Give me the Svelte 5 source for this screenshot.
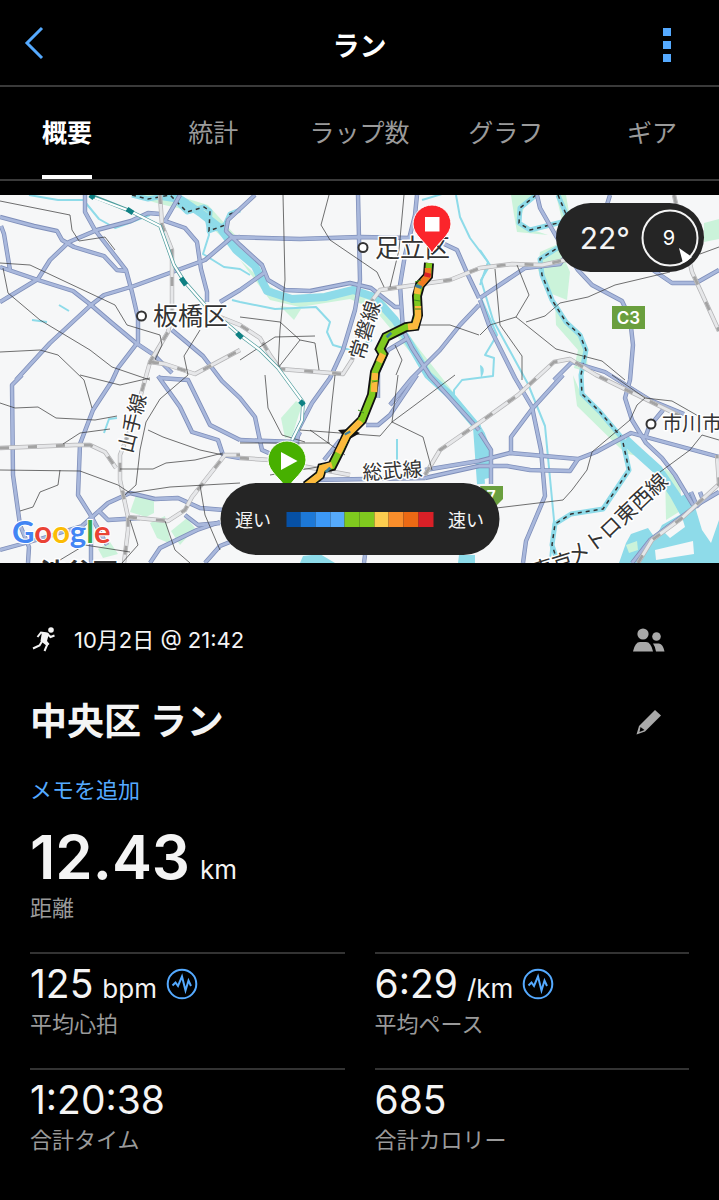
<script>
	const tabs = ["概要", "統計", "ラップ数", "グラフ", "ギア"];
	let active = 0;

	const stats = [
		{ value: "125", unit: "bpm", label: "平均心拍", chart: true },
		{ value: "6:29", unit: "/km", label: "平均ペース", chart: true },
		{ value: "1:20:38", label: "合計タイム" },
		{ value: "685", label: "合計カロリー" },
	];

	const paceColors = [
		"#0650a5", "#1d78d6", "#3c98f6", "#56aafb", "#7fc91f",
		"#7fc91f", "#fccd4f", "#f98e2b", "#eb6914", "#d92027",
	];

	const parks = [
		"M130,195 L175,195 208,205 235,235 240,250 225,240 195,212 160,204Z",
		"M240,260 L270,300 300,307 350,299 375,310 400,340 450,400 479,436 479,425 420,350 380,295 350,288 290,300 265,283Z",
		"M280,306 L301,309 294,320Z",
		"M130,512 L136,495 154,500 154,513 146,517Z",
		"M150,523 L165,516 171,544 157,538Z",
		"M171,531 L187,518 195,528 180,545Z",
		"M98,549 L110,542 118,554 103,558Z",
		"M281,418 L296,401 302,405 292,436 285,438Z",
		"M511,195 L536,195 525,205 519,222 530,229 548,235 517,232 514,215Z",
		"M556,195 L566,195 570,218 562,220Z",
		"M540,252 L558,244 570,272 567,300 547,292 538,270Z",
		"M555,303 L571,328 586,345 588,372 574,368 578,350 556,325Z",
		"M573,375 L581,394 604,420 640,457 625,453 577,406Z",
		"M665,468 L680,482 682,510 666,520Z",
		"M704,223 L719,219 719,239 704,242Z",
	];

	const water = [
		"M155,195 L180,199 202,214 220,228 236,250 255,266 267,291 292,299 325,297 353,290 374,297 395,320 410,344 428,375 450,395 477,427 481,484",
	];

	const streams = [
		"M29,195 L58,200 84,200",
		"M85,202 L99,219 115,228 129,223 150,215",
		"M205,215 L209,235 203,254 224,267 240,269 250,275",
		"M232,300 L240,302 275,309 316,307 330,322 327,332 333,345 350,350 372,340",
		"M456,195 L460,217 470,238 488,262 480,285",
		"M422,200 L442,194",
		"M480,250 L490,265 481,280 493,320 528,384 545,426 554,520 550,560",
		"M480,296 L497,335 485,355 494,358 493,376 462,380 454,390 454,401",
		"M59,305 L69,311",
		"M32,320 L47,322",
		"M104,433 L109,419 117,418",
		"M397,439 L397,460",
	];

	const levees = [
		"M132,195 L148,199 170,195 187,212 204,207 210,211 209,231 225,225 230,214 240,210",
		"M536,195 L520,208 519,223 530,230 558,223 580,217",
		"M558,195 L566,214 570,240 540,259 542,275 552,300 566,322 580,335 586,350 581,375 582,394 600,412 622,438 629,470 603,509 571,514 555,524 552,545 556,557",
	];

	const roads = [
		"M0,217 L34,226 57,231 62,240 74,247 104,256 117,270 127,271",
		"M85,195 L85,212 95,230 126,270 132,292 138,318 138,342 118,368 112,381 93,410 80,444 78,495 90,514 107,545",
		"M0,302 L38,279 50,260 69,242 97,230 131,221 148,213 160,214",
		"M0,267 L38,280 73,291 91,305 112,323 136,343 154,355 172,373",
		"M16,380 L50,343 91,305 104,295 134,286 205,260 231,238 240,237",
		"M1,226 L4,234 10,270",
		"M180,195 L165,221 185,228 197,242 201,269 207,292 207,302",
		"M255,195 L228,220 226,231 240,245 262,265 268,280 285,290 310,291 350,283 371,288 395,307 402,307",
		"M220,302 L240,290 264,273",
		"M230,237 L300,239 360,237 410,238",
		"M358,195 L360,280 355,310 343,350 330,378 312,403 298,430 297,445",
		"M417,195 L415,215 405,255 400,285 403,330 412,348 430,376 479,430",
		"M440,242 L457,250 468,275 479,298",
		"M479,305 L460,325 440,350 412,378 390,405",
		"M408,338 L388,350 378,372 378,398",
		"M417,375 L390,415 378,425 366,425",
		"M480,298 L525,268 560,264 570,250",
		"M537,195 L540,208 556,236 578,270 592,285 622,301 630,318 633,345 630,380 625,398 632,420 646,443 662,458 675,475 693,505",
		"M610,195 L606,208",
		"M650,268 L672,283 696,283 719,270",
		"M480,300 L490,328 515,378 532,407 541,450 545,496 526,541 523,563",
		"M554,380 L572,362 605,372 650,400 684,414",
		"M563,375 L532,409 511,437 511,454",
		"M425,470 L479,461 510,453 578,459 596,452 631,433 719,457",
		"M425,478 L479,466 507,466 530,470 570,471 578,459",
		"M480,433 L491,450 491,484",
		"M645,438 L649,427 663,410",
		"M632,563 L650,540 680,518 700,503 719,492",
		"M22,375 L12,385 13,475 20,525 29,547 28,563",
		"M0,550 L40,539 82,526 108,503 130,493 155,499 178,498 200,508 224,510",
		"M158,376 L180,407 192,432 218,440 223,455 240,458",
		"M160,378 L188,380 210,425 240,440",
		"M91,515 L91,563",
		"M98,510 L108,520 140,518",
		"M150,563 L160,548 197,530 220,522",
		"M185,515 L198,525 220,523",
		"M172,330 L203,356 222,381 240,398 255,417 262,450 280,458",
		"M205,563 L220,546 235,540",
		"M240,440 L295,442 300,432",
		"M310,480 L425,478",
		"M324,460 L340,440",
		"M365,555 L364,563",
		"M691,492 L697,506 703,500 700,492",
	];

	const rails = [
		"M160,195 L162,225 172,250 172,315 168,332 150,362 143,387 134,420 120,455 120,480 128,517 128,530 124,563",
		"M0,448 L75,445 90,445 105,452 116,468",
		"M150,362 L165,364 195,374 225,358 240,350",
		"M128,517 L168,521 185,510 192,497 225,455 240,455",
		"M215,315 L240,325 260,338 270,355 280,369 343,374 352,360 365,310 380,290 450,280 480,268 512,264 542,265 570,259",
		"M240,458 L270,460 350,475",
		"M425,475 L440,450 479,423 518,395 554,362 570,359 596,375 680,416",
		"M674,195 L692,272 719,331",
		"M638,563 L652,540 682,518 719,484 717,455",
	];

	const lines = [
		"M0,201 L70,215 72,230 79,241 105,237 115,250",
		"M0,263 L30,265 115,305 127,325 160,335 162,345 155,360",
		"M3,268 L8,293 40,320 90,350 112,367 150,380",
		"M0,352 L40,350 58,355 84,380 92,408",
		"M0,403 L15,408 38,407 56,418 95,420 117,416",
		"M63,444 L80,433 110,429",
		"M0,470 L80,471 118,485 130,493 170,487 240,483",
		"M60,470 L58,485 40,492 33,507 20,511",
		"M80,375 L120,385 150,378",
		"M146,422 L140,450 136,485 125,495",
		"M120,469 L153,469 166,463 195,460 223,453",
		"M148,430 L163,437 200,450 223,455",
		"M200,330 L184,356 188,375 160,399 146,422",
		"M283,195 L285,280 280,330 278,368",
		"M329,195 L321,225 330,240 377,272 384,287",
		"M404,195 L399,250 390,287",
		"M240,317 L280,322 300,340 315,343 319,370",
		"M405,325 L450,325 479,335",
		"M480,335 L490,325 516,317 556,349 602,361 625,380",
		"M526,322 L545,316 560,303 588,297 615,285 670,272",
		"M700,254 L719,247",
		"M495,269 L500,325 522,356 522,380",
		"M517,265 L529,295 516,317",
		"M265,375 L268,408 282,435 305,442",
		"M335,375 L332,402 328,443",
		"M398,375 L392,422 423,437 432,470",
		"M392,422 L380,436 300,430",
		"M455,375 L415,405 392,422",
		"M395,345 L402,360 396,375",
		"M480,510 L563,500 572,490 587,470 592,452 630,420 637,405 645,398 672,401 700,417",
		"M612,375 L645,398",
		"M660,472 L690,450 702,435 719,440",
		"M240,443 L330,443 M310,430 L345,455 M270,475 L330,465",
		"M60,560 L85,545 130,552 M130,520 L138,545 122,563 M200,485 L205,515 220,550 M165,521 L175,550 190,563",
		"M240,360 L275,337 315,336 M278,368 L300,340",
	];

	const route =
		"M429,263 L428,276 420,285 417,296 418,315 415,326 406,327 386,337 380,349 383,354 375,372 372,395 362,420 347,435 340,450 332,466 322,468 320,475 306,486";

	const pace = [
		["#f07a20", "M428,268 L428,276 420,285"],
		["#d92027", "M428,273 L427,277"],
		["#fcb93d", "M418,287 L417,294"],
		["#fcb93d", "M418,306 L418,317 415,326 408,327"],
		["#fcb93d", "M383,354 L379,362"],
		["#fcb93d", "M375,373 L374,392"],
		["#fcb93d", "M361,421 L347,435 338,453"],
		["#fcb93d", "M332,465 L322,468 320,475 306,486"],
		["#3d7f9c", "M419,285 L418,288 M388,334 L390,336 M347,432 L348,434 M327,469 L329,471"],
		["#7fc91f", "M362,418 L361,421 M375,380 L375,381"],
	];
</script>

<main>
	<header>
		<button class="back" aria-label="戻る">
			<svg width="20" height="34" viewBox="0 0 20 34">
				<path d="M18 2L3 17L18 32" fill="none" stroke="currentColor" stroke-width="3" />
			</svg>
		</button>
		<h1>ラン</h1>
		<button class="more" aria-label="メニュー">
			<svg width="8" height="34" viewBox="0 0 8 34">
				<path d="M0 0H8V8H0zM0 13H8V21H0zM0 26H8V34H0z" fill="currentColor" />
			</svg>
		</button>
	</header>

	<nav>
		<div class="tabs">
			{#each tabs as tab, i}
				<button class="tab" class:active={active === i} on:click={() => (active = i)}>
					{tab}
				</button>
			{/each}
		</div>
	</nav>

	<section class="map">
		<svg class="canvas" viewBox="0 195 719 368">
			<rect y="195" width="719" height="368" fill="#f6f7f8" />
			<g fill="#cbf3da">
				{#each parks as d}<path {d} />{/each}
			</g>
			<g fill="none" stroke="#8edbe9" stroke-linejoin="round">
				{#each water as d}<path {d} stroke-width="8" />{/each}
				{#each streams as d}<path {d} stroke-width="2" />{/each}
				{#each levees as d}<path {d} stroke-width="5" />{/each}
				<path d="M625,440 L638,452 658,470 675,495 686,515" stroke-width="10" />
			</g>
			<g fill="#8edbe9">
				<path d="M480,425 Q491,440 490,462 L489,478 480,480Z" />
				<path d="M480,365 Q487,368 481,378Z" />
				<path d="M676,498 L696,490 719,500 719,563 619,563 626,543 631,534 648,528 655,538 662,525 685,512Z" />
				<path d="M458,563 L459,555 475,555 475,563Z M300,563 L303,556 320,554 335,563Z" />
			</g>
			<path
				d="M690,490 L719,482 719,520 711,543 702,530Z M655,550 L693,541 694,554 656,560Z M662,530 L682,517 685,527 670,538Z"
				fill="#f6f7f8"
			/>
			<path d="M626,545 L637,541 638,550 629,553Z" fill="#cbf3da" />
			<g fill="none" stroke="#333" stroke-width="1.5" stroke-dasharray="4 4">
				{#each levees as d}<path {d} />{/each}
			</g>
			<g fill="none" stroke-linejoin="round">
				{#each roads as d}<path {d} stroke="#7f8fba" stroke-width="4.4" />{/each}
				{#each roads as d}<path {d} stroke="#a9b8dc" stroke-width="2.8" />{/each}
				{#each rails as d}<path {d} stroke="#b4b4b6" stroke-width="4.4" />{/each}
				{#each rails as d}<path {d} stroke="#e6e7e9" stroke-width="3" />{/each}
				{#each rails as d}
					<path {d} stroke="#a3a3a3" stroke-width="2.8" stroke-dasharray="9 19" />
				{/each}
				{#each lines as d}<path {d} stroke="#333" stroke-width="0.7" />{/each}
				<path
					d="M90,195 L105,201 130,211 160,226 165,240 174,265 184,281 205,305 240,335 260,350 278,368 303,402 302,420 292,440"
					stroke="#4c9c9c"
					stroke-width="3.6"
				/>
				<path
					d="M95,198 L130,211 160,226 165,240 174,265 184,281 205,305 240,335 260,350 278,368 303,402 302,420 292,440"
					stroke="#fff"
					stroke-width="2.2"
				/>
				<path
					d="M90,195 L94,198 M127,209 L133,213 M181,278 L186,285 M237,333 L242,338 M300,401 L304,405"
					stroke="#0e8083"
					stroke-width="5"
				/>
			</g>

			<g class="place">
				<text x="153" y="325" font-size="25">板橋区</text>
				<text x="375" y="257" font-size="25">足立区</text>
				<text x="662" y="431" font-size="20">市川市</text>
				<text x="40" y="582" font-size="26" font-weight="700">渋谷区</text>
				<text x="363" y="480" font-size="20" transform="rotate(-4 363 480)">総武線</text>
				<text x="363" y="361" font-size="20" transform="rotate(-73 363 361)">常磐線</text>
				<text x="132" y="454" font-size="20" transform="rotate(-76 132 454)">山手線</text>
				<path id="metro" d="M535,579 L570,568 605,543 690,463" fill="none" />
				<text font-size="21"><textPath href="#metro">東京メトロ東西線</textPath></text>
			</g>
			<g fill="#fff" stroke="#333" stroke-width="2">
				<circle cx="141.500" cy="316" r="4.500" />
				<circle cx="363" cy="247.500" r="4.500" />
				<circle cx="651" cy="424" r="4.500" />
			</g>

			<g class="shield">
				<path d="M612 306H645V329H612z" />
				<text x="628.500" y="324" font-size="17">C3</text>
				<path d="M480 486H503V499L490 512z" />
				<text x="491" y="502" font-size="16">7</text>
			</g>

			<g fill="none" stroke-linejoin="miter">
				<path d={route} stroke="#111" stroke-width="10" />
				<path d="M338,430 L350,429 360,433 348,440Z" fill="#111" />
				<path d={route} stroke="#7fc91f" stroke-width="6.4" />
				{#each pace as [color, d]}
					<path {d} stroke={color} stroke-width="6.4" />
				{/each}
				<path
					d="M421,280 L415,282 M420,301 L414,300 M421,309 L415,309 M378,381 L372,382 M364,413 L358,410"
					stroke="#39901a"
				/>
			</g>

			<path
				class="pin"
				fill="#fb252b"
				d="M432,253 C426,242 413,235 413,224 A18.500,18.500 0 0 1 451,224 C451,235 438,242 432,253Z"
			/>
			<path d="M425 217H439.500V231.500H425z" fill="#fff" />
			<path
				class="pin"
				fill="#47b000"
				d="M287,490 C282,479 268,472 268,460 A18.500,18.500 0 0 1 306,460 C306,472 292,479 287,490Z"
			/>
			<path d="M281 452L297.500 461L281 470z" fill="#fff" />

			<text class="logo" x="12" y="543">
				<tspan fill="#4285f4">G</tspan><tspan fill="#ea4335">o</tspan><tspan fill="#fbbc05">o</tspan><tspan fill="#4285f4">g</tspan><tspan fill="#34a853">l</tspan><tspan fill="#ea4335">e</tspan>
			</text>
		</svg>

		<div class="weather">
			<span>22°</span>
			<svg width="58" height="58" viewBox="0 0 58 58">
				<circle cx="29" cy="29" r="27.500" fill="none" stroke="#f4f4f4" stroke-width="2" />
				<path d="M38 39L51 48Q47 52 42 54z" fill="#fff" />
				<text x="28" y="36" font-size="20" text-anchor="middle" fill="#fff">9</text>
			</svg>
		</div>

		<div class="legend">
			<span>遅い</span>
			<div class="scale">
				{#each paceColors as color}
					<i style="background: {color}"></i>
				{/each}
			</div>
			<span>速い</span>
		</div>
	</section>

	<section class="details">
		<div class="row date">
			<svg width="26" height="26" viewBox="0 0 26 26">
				<circle cx="19" cy="3" r="2.800" fill="#f4f4f4" />
				<path
					d="M5.500 10L9 5.500L15 6.500L18.500 10L22.500 8.500M14.500 7L11 13.500L15.500 17L12.500 24M10.500 13.500L7.500 18.500L1 21.500"
					fill="none"
					stroke="#f4f4f4"
					stroke-width="2"
				/>
				<path d="M10 5L17 6.500L15 14L17.500 17L15 19L8.500 14z" fill="#f4f4f4" />
			</svg>
			<span class="when">10月2日 @ 21:42</span>
			<button class="icon" aria-label="公開設定">
				<svg width="32" height="24" viewBox="0 0 32 24">
					<circle cx="10" cy="6" r="5.600" />
					<circle cx="23.500" cy="8.500" r="4.300" />
					<path d="M0 23.500Q2 14 7 14H13Q18 14 20 23.500z" />
					<path d="M20 15.500H26Q30 16 31.500 23.500H23Q22.500 19 20 15.500z" />
				</svg>
			</button>
		</div>

		<div class="row name">
			<h2>中央区 ラン</h2>
			<button class="icon" aria-label="編集">
				<svg width="26" height="26" viewBox="0 0 26 26">
					<path
						fill-rule="evenodd"
						d="M19 1L25 6.500L9 22.500L0.500 25.500L3 17zM4.500 18L3.500 23L8.500 21z"
					/>
				</svg>
			</button>
		</div>

		<a class="memo" href="#memo">メモを追加</a>

		<div class="distance">
			<div class="figure"><strong>12.43</strong><span class="unit">km</span></div>
			<div class="label">距離</div>
		</div>

		<div class="stats">
			{#each stats as stat}
				<div class="stat">
					<div class="figure">
						<span class="value">{stat.value}</span>
						{#if stat.unit}<span class="unit">{stat.unit}</span>{/if}
						{#if stat.chart}
							<button class="chart" aria-label="{stat.label}のグラフ">
								<svg width="32" height="32" viewBox="0 0 32 32">
									<g fill="none" stroke="currentColor">
										<circle cx="16" cy="16" r="14.300" stroke-width="2" />
										<path
											d="M6.500 17.500L9.500 14.500L12 18L16 8.500L19.500 22.500L22.500 12.500L25 18"
											stroke-width="2"
										/>
									</g>
								</svg>
							</button>
						{/if}
					</div>
					<div class="label">{stat.label}</div>
				</div>
			{/each}
		</div>
	</section>
</main>

<style>
	:global(body) {
		margin: 0;
		background: #000;
	}

	main {
		min-height: 100vh;
		background: #000;
		color: #f4f4f4;
		font-family: Inter, "Noto Sans CJK JP", sans-serif;
	}

	button {
		padding: 0;
		border: none;
		background: none;
		color: inherit;
		font: inherit;
		cursor: pointer;
	}

	svg {
		display: block;
	}

	header {
		display: grid;
		grid-template-columns: 40px 1fr 40px;
		align-items: center;
		height: 87px;
		padding: 0 24px;
		border-bottom: 2px solid #3a3a3a;
		box-sizing: border-box;
		color: #55aaff;
	}

	.more {
		justify-self: end;
		padding: 4px 24px 0 0;
	}

	h1 {
		margin: 0;
		padding-top: 8px;
		color: #fff;
		font-size: 27px;
		line-height: 40px;
		text-align: center;
	}

	nav {
		overflow: hidden;
		border-bottom: 2px solid #3a3a3a;
		margin-bottom: 14px;
	}

	.tabs {
		display: grid;
		grid-template-columns: repeat(5, 1fr);
		justify-items: center;
		margin: 0 -6px;
	}

	.tab {
		height: 92px;
		border-bottom: 4px solid transparent;
		color: #9a9a9a;
		font-size: 25px;
		white-space: nowrap;
	}

	.tab.active {
		border-color: #fff;
		color: #fff;
		font-weight: 700;
	}

	.map {
		position: relative;
		overflow: hidden;
	}

	.canvas {
		width: 100%;
		height: auto;
	}

	.place {
		fill: #333;
		stroke: #fff;
		stroke-width: 3px;
		stroke-linejoin: round;
		paint-order: stroke;
	}

	.place path {
		stroke: none;
	}

	.shield {
		fill: #6a9f3e;
		font-weight: 600;
		text-anchor: middle;
	}

	.shield text {
		fill: #fff;
	}

	.pin {
		stroke: #fff;
		stroke-width: 1px;
	}

	.logo {
		font-family: Lato, sans-serif;
		font-size: 31px;
		font-weight: 700;
		stroke: #fff;
		stroke-width: 2px;
		paint-order: stroke;
	}

	.weather,
	.legend {
		position: absolute;
		display: flex;
		align-items: center;
		box-sizing: border-box;
		background: #252525;
	}

	.weather {
		top: 8px;
		right: 15px;
		gap: 11px;
		height: 69px;
		padding: 0 5px 0 24px;
		border-radius: 35px;
		font-size: 30px;
	}

	.legend {
		left: 50%;
		bottom: 8px;
		gap: 15px;
		height: 72px;
		padding: 0 15px;
		border-radius: 36px;
		transform: translateX(-50%);
		font-size: 18px;
		white-space: nowrap;
	}

	.scale {
		display: flex;
		width: 147px;
		height: 15px;
	}

	.scale i {
		flex: 1;
	}

	.details {
		padding: 57px 30px 24px;
	}

	.row {
		display: flex;
		align-items: center;
	}

	.date {
		gap: 16px;
		height: 40px;
		padding-left: 2px;
		font-size: 22px;
		line-height: 28px;
	}

	.icon {
		margin-left: auto;
		padding-right: 24px;
		fill: #a9a9a9;
	}

	.name {
		height: 60px;
		margin-top: 32px;
	}

	.name .icon {
		padding-right: 27px;
	}

	h2 {
		margin: 0;
		font-size: 37px;
		line-height: 60px;
	}

	.memo {
		display: block;
		margin-top: 22px;
		color: #55aaff;
		font-size: 22px;
		line-height: 32px;
		text-decoration: none;
	}

	.figure {
		display: flex;
		align-items: baseline;
		gap: 9px;
	}

	.distance {
		padding-bottom: 28px;
	}

	.distance .figure {
		gap: 10px;
		height: 56px;
		margin-top: 23px;
		padding-bottom: 7px;
		line-height: 56px;
	}

	strong {
		font-size: 60px;
		font-weight: 600;
	}

	.unit {
		font-size: 26px;
	}

	.label {
		color: #9a9a9a;
		font-size: 22px;
		line-height: 32px;
	}

	.stats {
		display: grid;
		grid-template-columns: 1fr 1fr;
		column-gap: 30px;
	}

	.stat {
		height: 116px;
		border-top: 2px solid #333;
		box-sizing: border-box;
		padding-top: 6px;
	}

	.stat .figure {
		line-height: 48px;
		height: 48px;
	}

	.value {
		font-size: 39px;
	}

	.chart {
		align-self: center;
		color: #55aaff;
	}
</style>
